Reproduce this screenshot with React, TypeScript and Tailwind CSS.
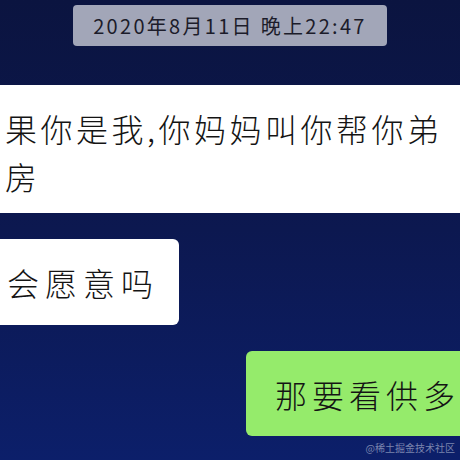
const FONT = "font-['Noto_Sans_CJK_SC','Noto_Sans',sans-serif]"

export default function App() {
  return (
    <div
      className={`${FONT} w-[460px] h-[460px] overflow-hidden flex flex-col bg-linear-to-b from-[#0b1440] via-[#0c1850] to-[#0c1f6a]`}
    >
      <div className="mt-[5px] mx-auto w-[314px] h-[41px] rounded-[4px] bg-[#a2a6b8] flex items-center justify-center text-[20px] tracking-[2.3px] text-[#1c1c2a] leading-none">
        2020年8月11日 晚上22:47
      </div>

      <div className="mt-[39px] h-[128px] bg-white pt-[19px] pl-[5px] overflow-hidden whitespace-nowrap text-[32px] leading-[48px] tracking-[3.5px] text-[#141414] font-light">
        <div>果你是我,你妈妈叫你帮你弟</div>
        <div>房</div>
      </div>

      <div className="mt-[26px] w-[179px] h-[86px] bg-white rounded-r-[6px] flex items-center pl-[7px] text-[32px] tracking-[6px] text-[#141414] font-light whitespace-nowrap">
        会愿意吗
      </div>

      <div className="mt-[26px] ml-[246px] w-[214px] h-[85px] bg-[#95eb6b] rounded-l-[6px] flex items-center pl-[29px] overflow-hidden text-[32px] tracking-[5px] text-[#141414] font-light whitespace-nowrap">
        那要看供多
      </div>

      <div className="mt-[7px] self-end pr-[5px] text-[10px] leading-none text-[#7a84ad]">
        @稀土掘金技术社区
      </div>
    </div>
  )
}
